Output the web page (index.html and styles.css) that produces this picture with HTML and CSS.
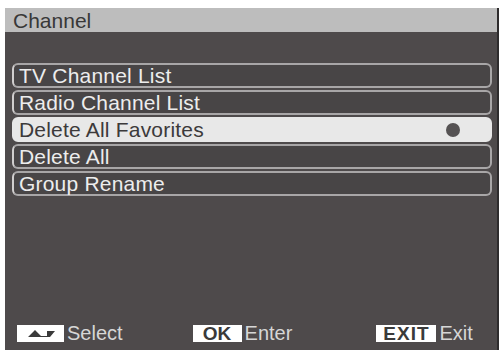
FILE: index.html
```html
<html lang="en">
<head>
    <meta charset="UTF-8">
    <title>Channel</title>
    <link rel="stylesheet" href="styles.css">
</head>
<body>
    <div class="screen">
        <div class="title-bar">Channel</div>

        <ul class="menu">
            <li class="menu-item">TV Channel List</li>
            <li class="menu-item">Radio Channel List</li>
            <li class="menu-item selected">Delete All Favorites <span class="dot"></span></li>
            <li class="menu-item">Delete All</li>
            <li class="menu-item">Group Rename</li>
        </ul>

        <div class="help-bar">
            <div class="help">
                <span class="key key-arrows">
                    <svg width="30" height="9" viewBox="0 0 30 9">
                        <path d="M2 8 L9 1 L15 7 L21 7 L21 2 L29 2 L24 8 Z" fill="#3a3a3a"/>
                    </svg>
                </span>
                Select
            </div>
            <div class="help help-ok">
                <span class="key key-ok">OK</span>
                Enter
            </div>
            <div class="help help-exit">
                <span class="key key-exit">EXIT</span>
                Exit
            </div>
        </div>
    </div>
</body>
</html>
```

FILE: styles.css
```css
body {
    margin: 0;
    background-color: #ffffff;
    font-family: "Liberation Sans", Arial, sans-serif;
}

.screen {
    display: flex;
    flex-direction: column;
    width: 492px;
    height: 342px;
    margin: 8px 0 0 5px;
    background-color: #4e4a4b;
    border-right: 2px solid #2e2c2d;
}

.title-bar {
    height: 24px;
    line-height: 25px;
    padding-left: 8px;
    background-color: #bdbdbd;
    color: #383838;
    font-size: 21px;
}

.menu {
    list-style: none;
    margin: 0;
    padding: 31px 5px 0 7px;
    display: flex;
    flex-direction: column;
    gap: 2px;
}

.menu-item {
    display: flex;
    align-items: center;
    justify-content: space-between;
    height: 21px;
    padding: 0 30px 0 5px;
    border: 2px solid #a8a6a7;
    border-left-color: #d0cece;
    border-radius: 6px;
    background-color: #484546;
    color: #ededed;
    font-size: 21px;
    letter-spacing: 0.2px;
}

.menu-item.selected {
    background-color: #e8e8e8;
    border-color: #e8e8e8;
    color: #3c3a3b;
}

.dot {
    width: 14px;
    height: 14px;
    border-radius: 50%;
    background-color: #555253;
}

.help-bar {
    margin-top: auto;
    display: flex;
    padding: 0 0 5px 12px;
}

.help {
    display: flex;
    align-items: center;
    gap: 3px;
    color: #d6d6d6;
    font-size: 20px;
}

.help-ok {
    margin-left: 70px;
}

.help-exit {
    margin-left: 84px;
}

.key {
    display: flex;
    align-items: center;
    justify-content: center;
    height: 17px;
    background-color: #ffffff;
    color: #3a3a3a;
    font-weight: bold;
    font-size: 19px;
}

.key-arrows {
    width: 47px;
}

.key-ok {
    width: 49px;
}

.key-exit {
    width: 60px;
    letter-spacing: 1px;
}
```
